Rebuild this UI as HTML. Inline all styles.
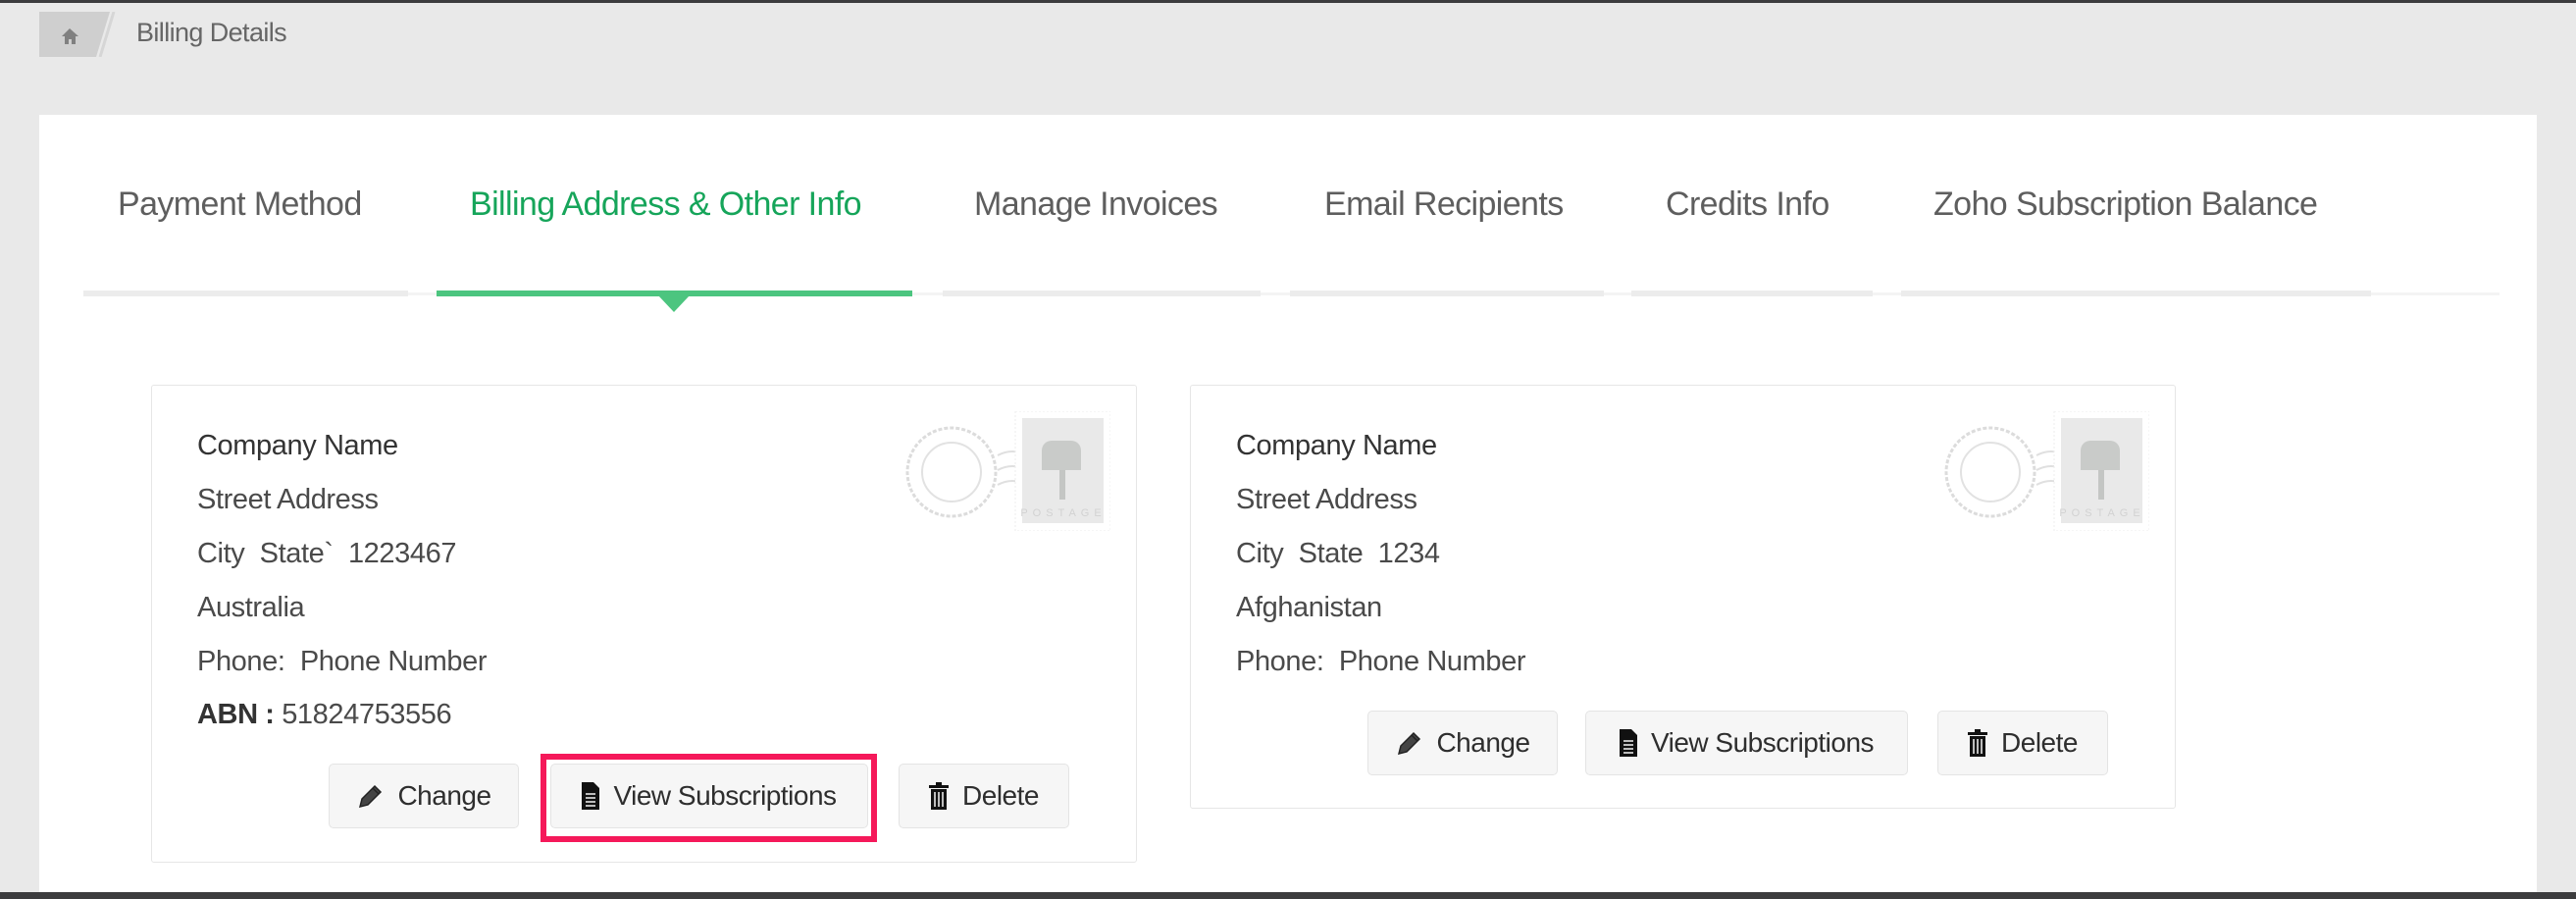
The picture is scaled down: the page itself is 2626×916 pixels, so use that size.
<!DOCTYPE html>
<html><head><meta charset="utf-8"><style>
*{margin:0;padding:0;box-sizing:border-box}
body{width:2626px;height:916px;background:#e9e9e9;position:relative;overflow:hidden;font-family:"Liberation Sans",sans-serif}
.a{position:absolute}
.tab{position:absolute;top:189px;font-size:34px;color:#5e5e5e;letter-spacing:-0.6px;white-space:nowrap}
.ul{position:absolute;top:296px;height:6px;background:#ececec}
.card{position:absolute;background:#fff;border:1px solid #e6e6e6;border-radius:3px}
.ln{position:absolute;left:46px;font-size:29px;color:#4a4a4a;letter-spacing:-0.4px;white-space:nowrap}
.btn{position:absolute;height:66px;background:#f6f6f6;border:1px solid #e4e4e4;border-radius:5px;font-size:28px;color:#2e2e2e;letter-spacing:-0.5px;display:flex;align-items:center;justify-content:center;gap:14px;white-space:nowrap}
.stamp{position:absolute;width:210px;height:122px}
</style></head><body>
<div class="a" style="left:0;top:0;width:2626px;height:3px;background:#3c3c3e"></div>
<div class="a" style="left:0;top:909px;width:2626px;height:7px;background:#3c3c3e"></div>
<svg class="a" style="left:40px;top:12px" width="80" height="46"><polygon points="0,0 72,0 58,46 0,46" fill="#cfcfcf"/><line x1="76" y1="0" x2="62" y2="46" stroke="#d6d6d6" stroke-width="3"/><path d="M31 17 L23 25 H26 V33 H30 V28 H33 V33 H37 V25 H40 Z" fill="#808080"/></svg>
<div class="a" style="left:139px;top:18px;font-size:27px;color:#666;letter-spacing:-0.6px">Billing Details</div>
<div class="a" style="left:40px;top:117px;width:2546px;height:792px;background:#fff"></div>
<div class="tab" style="left:120px">Payment Method</div>
<div class="tab" style="left:479px;color:#16a55a">Billing Address &amp; Other Info</div>
<div class="tab" style="left:993px">Manage Invoices</div>
<div class="tab" style="left:1350px">Email Recipients</div>
<div class="tab" style="left:1698px">Credits Info</div>
<div class="tab" style="left:1971px">Zoho Subscription Balance</div>
<div class="a" style="left:85px;top:298px;width:2463px;height:3px;background:#f4f4f4"></div>
<div class="ul" style="left:85px;width:331px"></div>
<div class="ul" style="left:445px;width:485px;background:#4cc57f"></div>
<svg class="a" style="left:671px;top:301px" width="32" height="17"><polygon points="0,0 32,0 16,17" fill="#4cc57f"/></svg>
<div class="ul" style="left:961px;width:324px"></div>
<div class="ul" style="left:1315px;width:320px"></div>
<div class="ul" style="left:1663px;width:246px"></div>
<div class="ul" style="left:1938px;width:479px"></div>

<svg width="0" height="0" style="position:absolute"><defs>
<g id="stamp"><circle cx="48" cy="62" r="45" fill="none" stroke="#dcdcdc" stroke-width="3" stroke-dasharray="4 2"/><circle cx="48" cy="62" r="30" fill="none" stroke="#e2e2e2" stroke-width="2"/><path d="M95 45 q15 -8 30 0 t30 0 t30 0 M95 60 q15 -8 30 0 t30 0 t30 0 M95 75 q15 -8 30 0 t30 0 t30 0" fill="none" stroke="#e0e0e0" stroke-width="2"/><rect x="113" y="0" width="97" height="122" fill="#fff" stroke="#eee" stroke-dasharray="2 2"/><rect x="120" y="7" width="83" height="107" fill="#e9e9e9"/><path d="M150 30 h20 a10 10 0 0 1 10 10 v20 h-40 v-20 a10 10 0 0 1 10 -10z" fill="#c9cbc9"/><rect x="158" y="60" width="6" height="30" fill="#c4c6c4"/><text x="162" y="107" font-size="11" fill="#d2d2d2" text-anchor="middle" letter-spacing="5" font-family="Liberation Sans">POSTAGE</text></g>
<g id="pen"><path d="M4 26 L6 18 L19 5 L25 11 L12 24 Z M17 7 L23 13" fill="#444" stroke="#222" stroke-width="1.5"/></g>
<g id="doc"><path d="M0 0 H12 L18 6 V28 H0 Z" fill="#111"/><path d="M4 12h10M4 16h10M4 20h10M4 24h10" stroke="#f6f6f6" stroke-width="1.5"/></g>
<g id="bin"><rect x="0" y="3" width="20" height="3" fill="#111"/><rect x="7" y="0" width="6" height="3" fill="#111"/><rect x="2" y="7" width="16" height="21" fill="#111"/><path d="M6 10v15M10 10v15M14 10v15" stroke="#f6f6f6" stroke-width="1.5"/></g>
</defs></svg>

<div class="card" style="left:154px;top:392px;width:1005px;height:487px">
<svg class="stamp" style="left:767px;top:26px"><use href="#stamp"/></svg>
<div class="ln" style="top:45px;color:#333">Company Name</div>
<div class="ln" style="top:100px">Street Address</div>
<div class="ln" style="top:155px">City&nbsp; State`&nbsp; 1223467</div>
<div class="ln" style="top:210px">Australia</div>
<div class="ln" style="top:265px">Phone:&nbsp; Phone Number</div>
<div class="ln" style="top:319px"><b style="color:#333">ABN :</b> 51824753556</div>
</div>
<div class="btn" style="left:335px;top:778px;width:194px"><svg width="28" height="30"><use href="#pen"/></svg>Change</div>
<div class="a" style="left:551px;top:768px;width:343px;height:90px;border:6px solid #f5195a"></div>
<div class="btn" style="left:561px;top:778px;width:324px"><svg width="18" height="28"><use href="#doc"/></svg>View Subscriptions</div>
<div class="btn" style="left:916px;top:778px;width:174px"><svg width="20" height="28"><use href="#bin"/></svg>Delete</div>

<div class="card" style="left:1213px;top:392px;width:1005px;height:432px">
<svg class="stamp" style="left:767px;top:26px"><use href="#stamp"/></svg>
<div class="ln" style="top:45px;color:#333">Company Name</div>
<div class="ln" style="top:100px">Street Address</div>
<div class="ln" style="top:155px">City&nbsp; State&nbsp; 1234</div>
<div class="ln" style="top:210px">Afghanistan</div>
<div class="ln" style="top:265px">Phone:&nbsp; Phone Number</div>
</div>
<div class="btn" style="left:1394px;top:724px;width:194px"><svg width="28" height="30"><use href="#pen"/></svg>Change</div>
<div class="btn" style="left:1616px;top:724px;width:329px"><svg width="18" height="28"><use href="#doc"/></svg>View Subscriptions</div>
<div class="btn" style="left:1975px;top:724px;width:174px"><svg width="20" height="28"><use href="#bin"/></svg>Delete</div>
</body></html>
